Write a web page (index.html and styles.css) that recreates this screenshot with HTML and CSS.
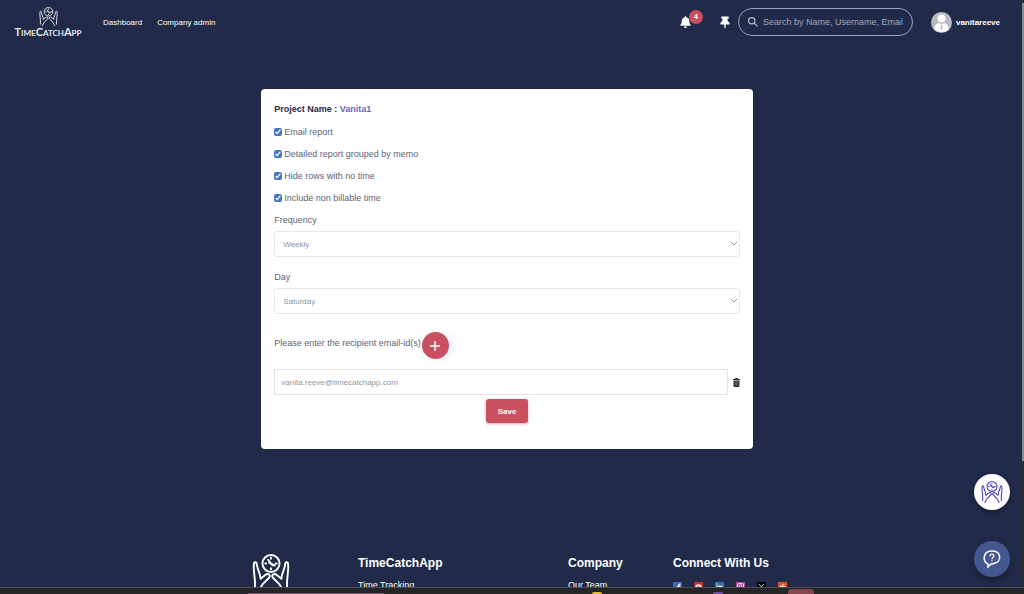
FILE: index.html
```html
<!DOCTYPE html>
<html lang="en">
<head>
    <meta charset="UTF-8">
    <meta name="viewport" content="width=device-width, initial-scale=1.0">
    <title>TimeCatchApp</title>
    <link rel="stylesheet" href="styles.css">
</head>
<body>
    <svg class="defs" aria-hidden="true">
        <symbol id="hands" viewBox="0 0 40 40">
            <g fill="none" stroke="currentColor" stroke-linecap="round" stroke-linejoin="round">
                <circle cx="20" cy="10" r="9"/>
                <path d="M20 4v1M20 15v1M14 10h1M25 10h1M17 6l3 4 4 2M18 9l4 3" />
                <path d="M3 36C4 26 1 18 2 11c0-3 3-3 3 0 1 7 4 9 4 15l5-4c3-2 6 0 4 3l-7 7-4 7"/>
                <path d="M37 36c-1-10 2-18 1-25 0-3-3-3-3 0-1 7-4 9-4 15l-5-4c-3-2-6 0-4 3l7 7 4 7"/>
            </g>
        </symbol>
    </svg>

    <div class="window">
        <div class="page">
            <header class="header">
                <a href="#" class="brand">
                    <svg class="brand-icon"><use href="#hands"/></svg>
                    <span class="brand-name">TimeCatchApp</span>
                </a>
                <nav class="nav">
                    <a href="#">Dashboard</a>
                    <a href="#">Company admin</a>
                </nav>
                <div class="tools">
                    <button class="icon-button bell" aria-label="Notifications">
                        <svg viewBox="0 0 448 512" width="11" height="12" fill="currentColor"><path d="M224 512c35 0 64-29 64-64H160c0 35 29 64 64 64zm215-150c-19-20-55-51-55-154 0-77-54-139-128-155V32a32 32 0 0 0-64 0v21C118 69 64 131 64 208c0 103-36 134-55 154-6 6-9 14-9 22 0 16 13 32 32 32h384c19 0 32-16 32-32 0-8-3-16-9-22z"/></svg>
                        <span class="badge">4</span>
                    </button>
                    <button class="icon-button" aria-label="Pinned">
                        <svg viewBox="0 0 384 512" width="10" height="13" fill="currentColor"><path d="M64 16h256c13 0 24 11 24 24v32c0 13-11 24-24 24h-32l10 110c46 22 78 58 78 100 0 13-11 24-24 24H220v110l-28 60-28-60V330H32c-13 0-24-11-24-24 0-42 32-78 78-100L96 96H64c-13 0-24-11-24-24V40c0-13 11-24 24-24z"/></svg>
                    </button>
                    <label class="search">
                        <svg viewBox="0 0 16 16" width="10" height="10" fill="none" stroke="currentColor" stroke-width="2"><circle cx="6" cy="6" r="5"/><path d="M10 10l5 5"/></svg>
                        <input type="text" placeholder="Search by Name, Username, Email" aria-label="Search">
                    </label>
                    <a href="#" class="user">
                        <svg viewBox="0 0 42 42" width="21" height="21"><circle cx="21" cy="21" r="21" fill="#b9bbc1"/><circle cx="21" cy="13" r="8" fill="#fff"/><path d="M7 36c0-9 3-13 9-14l5 3 5-3c6 1 9 5 9 14-8 5-20 5-28 0z" fill="#fff"/><path d="M20 25h2l1 8-2 3-2-3z" fill="#b9bbc1"/></svg>
                        <span>vanitareeve</span>
                    </a>
                </div>
            </header>

            <main class="main">
                <form class="card">
                    <h1 class="card-title">Project Name : <span>Vanita1</span></h1>
                    <label class="check"><input type="checkbox" checked> Email report</label>
                    <label class="check"><input type="checkbox" checked> Detailed report grouped by memo</label>
                    <label class="check"><input type="checkbox" checked> Hide rows with no time</label>
                    <label class="check"><input type="checkbox" checked> Include non billable time</label>

                    <div class="field">
                        <label for="frequency">Frequency</label>
                        <div class="select">
                            <select id="frequency"><option>Weekly</option></select>
                            <svg viewBox="0 0 6 4" width="6" height="4"><path d="M0 0l3 3 3-3"/></svg>
                        </div>
                    </div>
                    <div class="field">
                        <label for="day">Day</label>
                        <div class="select">
                            <select id="day"><option>Saturday</option></select>
                            <svg viewBox="0 0 6 4" width="6" height="4"><path d="M0 0l3 3 3-3"/></svg>
                        </div>
                    </div>

                    <div class="recipients">
                        <label for="email">Please enter the recipient email-id(s)</label>
                        <button type="button" class="add" aria-label="Add recipient">
                            <svg viewBox="0 0 10 10" width="10" height="10"><path d="M5 0v10M0 5h10" stroke="#fff" stroke-width="1.5"/></svg>
                        </button>
                    </div>
                    <div class="email-row">
                        <input type="text" id="email" value="vanita.reeve@timecatchapp.com">
                        <button type="button" class="delete" aria-label="Delete recipient">
                            <svg viewBox="0 0 14 18" width="7" height="9"><path d="M4 0h6v2h4v2H0V2h4zM1 5h12v11q0 2-2 2H3q-2 0-2-2z" fill="#333"/><path d="M4.500 7v8M7 7v8M9.500 7v8" stroke="#888"/></svg>
                        </button>
                    </div>
                    <button type="submit" class="save">Save</button>
                </form>
            </main>

            <footer class="footer">
                <svg class="footer-logo"><use href="#hands"/></svg>
                <div>
                    <h2>TimeCatchApp</h2>
                    <a href="#">Time Tracking</a>
                </div>
                <div>
                    <h2>Company</h2>
                    <a href="#">Our Team</a>
                </div>
                <div>
                    <h2>Connect With Us</h2>
                    <div class="social">
                        <a href="#" aria-label="Facebook"><svg viewBox="0 0 18 18"><rect width="18" height="18" fill="#4267b8"/><path d="M10 18v-7H8V8h2V6q0-4 5-3v3q-2-1-2 1v1h2v3h-2v7z" fill="#fff"/></svg></a>
                        <a href="#" aria-label="YouTube"><svg viewBox="0 0 18 18"><rect width="18" height="18" fill="#c9302c"/><rect x="3" y="5" width="12" height="9" rx="3" fill="#fff"/><path d="M7 7l5 3-5 3z" fill="#c9302c"/></svg></a>
                        <a href="#" aria-label="LinkedIn"><svg viewBox="0 0 18 18"><rect width="18" height="18" fill="#3b6ea8"/><path d="M3 7h2v8H3zM3 3h2v2H3zM7 7h3v1q5-3 5 3v4h-3v-4q-1-2-2 0v4H7z" fill="#fff"/></svg></a>
                        <a href="#" aria-label="Instagram"><svg viewBox="0 0 18 18"><rect width="18" height="18" fill="#a5509c"/><rect x="3" y="3" width="12" height="12" rx="3" fill="none" stroke="#f0c8e0" stroke-width="2"/><circle cx="9" cy="9" r="3" fill="none" stroke="#f0c8e0" stroke-width="2"/></svg></a>
                        <a href="#" aria-label="X"><svg viewBox="0 0 18 18"><rect width="18" height="18" fill="#000"/><path d="M4 4l9 11M14 4L4 15" stroke="#ccc" stroke-width="2"/></svg></a>
                        <a href="#" aria-label="Reddit"><svg viewBox="0 0 18 18"><rect width="18" height="18" fill="#e0532c"/><ellipse cx="9" cy="11" rx="6" ry="4" fill="#fff"/><path d="M9 8l1-4 3 1" stroke="#fff" fill="none"/><circle cx="7" cy="10" r="1" fill="#e0532c"/><circle cx="11" cy="10" r="1" fill="#e0532c"/></svg></a>
                    </div>
                </div>
            </footer>
        </div>

        <div class="scrollbar"><div class="thumb"></div></div>

        <div class="floating">
            <button class="float-button light" aria-label="Timer">
                <svg width="22" height="22"><use href="#hands"/></svg>
            </button>
            <button class="float-button blue" aria-label="Help">
                <svg viewBox="0 0 18 18" width="18" height="18" fill="none" stroke="#fff" stroke-linecap="round"><path d="M5 14C-1 11 0 1 9 1s10 10 3 12c-2 1-3 1-4 1l-3 3z" stroke-width="1.500"/><path d="M7 6c0-3 4-2 4 0 0 1-2 1-2 3M9 10.500v.5" stroke-width="1.200"/></svg>
            </button>
        </div>
    </div>

    <div class="dock">
        <span class="dock-line"></span>
        <span class="dock-yellow"></span>
        <span class="dock-purple"></span>
        <span class="dock-red"></span>
    </div>
</body>
</html>
```
FILE: styles.css
```css
* { box-sizing: border-box; }
body { margin: 0; height: 100vh; display: flex; flex-direction: column; overflow: hidden; background: #212b49; font-family: "Liberation Sans", Arial, sans-serif; font-size: 9px; }
a { color: inherit; text-decoration: none; }
button { padding: 0; border: 0; background: none; font-family: inherit; cursor: pointer; }
input, select { font-family: inherit; }
svg { display: block; flex: none; }
.defs { position: absolute; width: 0; height: 0; }

.window { flex: 1; min-height: 0; display: flex; position: relative; overflow: hidden; }
.page { flex: 1; }

/* header */
.header { display: flex; align-items: center; height: 44px; padding: 0 22px 0 15px; color: #fff; font-size: 8px; }
.brand { width: 66px; display: flex; flex-direction: column; align-items: center; color: #e4e6ee; }
.brand-icon { width: 19px; height: 19px; stroke-width: 2; }
.brand-name { font-family: Lato, sans-serif; font-size: 11px; font-weight: bold; font-variant: small-caps; line-height: 12px; }
.nav { display: flex; gap: 15px; margin-left: 22px; }
.tools { display: flex; align-items: center; margin-left: auto; }
.icon-button { position: relative; color: #fff; margin-right: 29px; }
.icon-button + .icon-button { margin-right: 8px; }
.badge { position: absolute; top: -6px; left: 9px; width: 14px; height: 14px; border-radius: 50%; background: #c9505f; font-size: 7px; font-weight: bold; line-height: 14px; }
.search { display: flex; align-items: center; gap: 5px; width: 175px; height: 28px; padding: 0 9px; border: 1px solid #9ba3b8; border-radius: 14px; color: #b4b9c9; }
.search input { flex: 1; min-width: 0; padding: 0; border: 0; outline: 0; background: none; color: #fff; font-size: 9px; }
.search input::placeholder { color: #a2a8ba; }
.user { display: flex; align-items: center; gap: 4px; margin-left: 18px; font-weight: bold; }

/* report form */
.main { padding: 45px 8px 0 0; }
.card { width: 48vw; margin: 0 auto; padding: 9px 13px 26px; border-radius: 4px; background: #fff; color: #5b6478; display: flex; flex-direction: column; }
.card-title { margin: 0 0 1px; font-size: 9px; line-height: 22px; color: #2a2747; }
.card-title span { color: #6c66c0; }
.check { display: flex; align-items: center; gap: 2px; height: 22px; }
.check input { width: 8px; height: 8px; margin: 0; accent-color: #4676c4; }
.field { line-height: 22px; margin-bottom: 9px; }
.field label { display: block; }
.select { position: relative; }
.select select { display: block; width: 100%; height: 26px; padding: 0 8px; appearance: none; border: 1px solid #e6e8ec; border-radius: 3px; background: #fff; color: #8e949f; font-size: 8px; }
.select svg { position: absolute; right: 3px; top: 11px; fill: none; stroke: #999; }
.recipients { display: flex; align-items: flex-start; gap: 1px; margin-top: 9px; line-height: 22px; }
.add { display: grid; place-items: center; width: 27px; height: 27px; border-radius: 50%; background: #c9505f; box-shadow: 4px 1px 10px rgba(0, 0, 0, 0.06); }
.email-row { display: flex; align-items: center; gap: 5px; margin-top: 10px; }
.email-row input { flex: 1; height: 26px; padding: 0 6px; border: 1px solid #e2e3e6; color: #92979f; font-size: 8px; }
.delete { border-radius: 50%; box-shadow: 0 1px 10px rgba(0, 0, 0, 0.05); }
.save { align-self: center; width: 42px; height: 24px; margin-top: 4px; border-radius: 3px; background: #c9505f; color: #fff; font-size: 8px; font-weight: bold; box-shadow: 0 1px 3px rgba(201, 80, 95, 0.5); }

/* footer */
.footer { display: grid; grid-template-columns: 106px 210px 105px 1fr; padding: 105px 0 0 252px; color: #fff; }
.footer-logo { width: 38px; height: 38px; stroke-width: 2; }
.footer h2 { margin: 0 0 8px; font-size: 12px; line-height: 18px; }
.footer a { display: block; line-height: 10px; }
.social { display: flex; gap: 12px; padding-top: 2px; }
.social svg { width: 9px; height: 9px; }

.scrollbar { width: 2px; background: #2b2c2e; }
.thumb { height: 78%; margin-top: 3px; background: #898c91; }

.floating { position: absolute; right: 14px; bottom: 10px; display: flex; flex-direction: column; gap: 31px; }
.float-button { display: grid; place-items: center; width: 36px; height: 36px; border-radius: 50%; box-shadow: 0 3px 8px rgba(0, 0, 0, 0.3); }
.light { background: #fff; color: #4b3fc4; stroke-width: 2; }
.blue { background: #435791; }

/* top edge of the desktop dock */
.dock { display: grid; grid-template-columns: 248px 136px 208px 10px 111px 10px 65px 26px; align-items: end; height: 7px; border-top: 1px solid #4b4c52; background: #252528; overflow: hidden; }
.dock-line { grid-column: 2; height: 1px; background: #66555f; }
.dock-yellow { grid-column: 4; height: 2px; border-radius: 5px 5px 0 0; background: #e8b92e; }
.dock-purple { grid-column: 6; height: 2px; border-radius: 5px 5px 0 0; background: #6a4fa8; }
.dock-red { grid-column: 8; height: 5px; border-radius: 3px 3px 0 0; background: #85454c; }
```
